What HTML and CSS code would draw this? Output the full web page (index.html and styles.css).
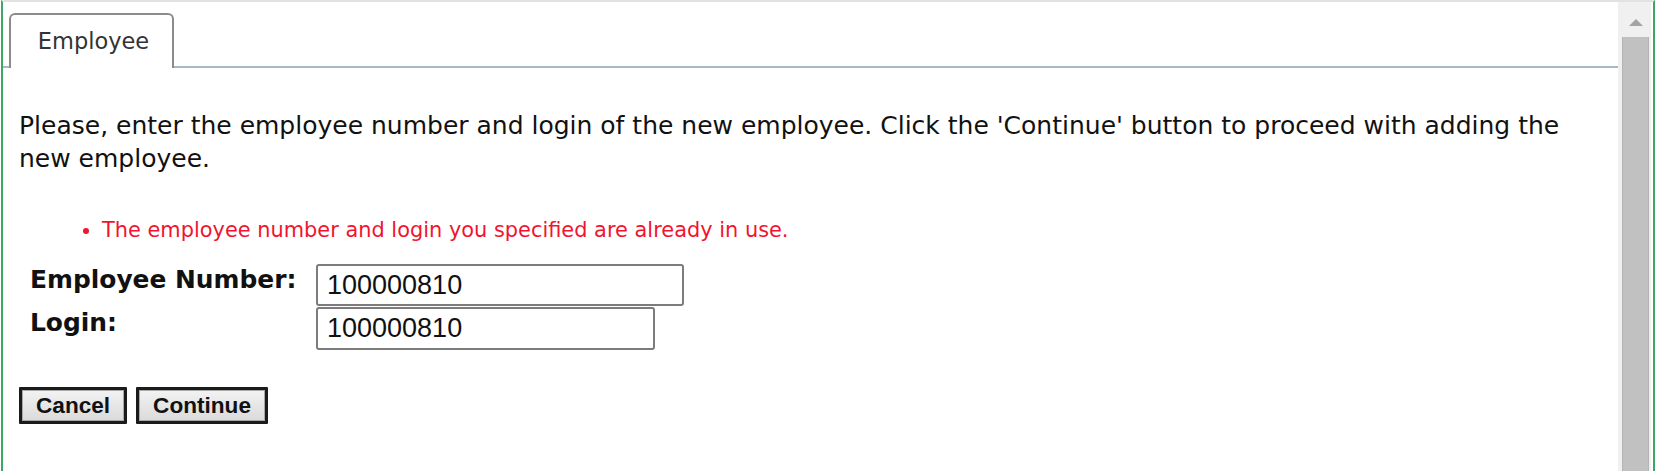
FILE: index.html
```html
<!DOCTYPE html>
<html lang="en">
<head>
<meta charset="utf-8">
<title>Employee</title>
<link rel="stylesheet" href="styles.css">
</head>
<body>
<div class="frame">
  <div class="content">
    <div class="tabs">
      <div class="tab">Employee</div>
    </div>
    <div class="panel">
      <p class="intro">Please, enter the employee number and login of the new employee. Click the 'Continue' button to proceed with adding the new employee.</p>
      <ul class="errors">
        <li>The employee number and login you specified are already in use.</li>
      </ul>
      <div class="form">
        <label class="label" for="num">Employee Number:</label>
        <div class="field"><input id="num" class="input input-num" type="text" value="100000810"></div>
        <label class="label" for="login">Login:</label>
        <div class="field"><input id="login" class="input input-login" type="text" value="100000810"></div>
      </div>
      <div class="actions">
        <button class="btn" type="button">Cancel</button>
        <button class="btn" type="button">Continue</button>
      </div>
    </div>
  </div>
  <div class="scrollbar">
    <div class="arrow"></div>
    <div class="thumb"></div>
  </div>
  <div class="gutter"></div>
</div>
</body>
</html>
```

FILE: styles.css
```css
html, body {
  margin: 0;
  padding: 0;
  background: #ffffff;
}

body {
  font-family: "DejaVu Sans", Verdana, sans-serif;
  color: #111;
}

.frame {
  display: flex;
  box-sizing: border-box;
  width: 1654px;
  height: 471px;
  margin-left: 1px;
  border-top: 2px solid #e2e2e2;
  border-left: 2px solid #3fa565;
  border-right: 2px solid #3fa565;
  overflow: hidden;
}

.content {
  flex: 1 1 auto;
  min-width: 0;
}

.tabs {
  display: flex;
  padding: 11px 0 0 6px;
  border-bottom: 2px solid #a7b9c9;
}

.tab {
  box-sizing: border-box;
  width: 165px;
  height: 55px;
  margin-bottom: -2px;
  padding: 1px 0 0 4px;
  border: 2px solid #8c8c8c;
  border-bottom: 0;
  border-radius: 6px 6px 0 0;
  background: #fff;
  text-align: center;
  font-size: 22.5px;
  line-height: 50px;
  color: #333;
}

.panel {
  padding: 0 20px 0 16px;
}

.intro {
  margin: 41px 0 0 0;
  font-size: 25px;
  line-height: 33px;
  color: #111;
}

.errors {
  margin: 42px 0 0 0;
  padding-left: 83px;
  font-size: 20.9px;
  line-height: 26px;
  color: #f2132f;
}

.form {
  display: grid;
  grid-template-columns: 286px auto;
  row-gap: 1px;
  margin: 21px 0 0 11px;
  align-items: start;
}

.label {
  font-size: 24.9px;
  font-weight: bold;
  line-height: 30px;
  padding-top: 1px;
  color: #111;
}

.field {
  display: flex;
}

.input {
  box-sizing: border-box;
  height: 42px;
  padding: 0 0 0 9px;
  border: 2px solid #7c7c7c;
  border-radius: 3px;
  font-family: "Liberation Sans", Arial, sans-serif;
  font-size: 27px;
  color: #111;
  background: #fff;
  outline: none;
}

.input-num {
  width: 368px;
}

.input-login {
  width: 339px;
  height: 43px;
}

.actions {
  display: flex;
  gap: 9px;
  margin-top: 37px;
}

.btn {
  box-sizing: border-box;
  height: 37px;
  padding: 0 14px;
  margin: 0;
  border: 3px solid #1b1b1b;
  border-radius: 1px;
  background: linear-gradient(#f3f3f3, #dadada);
  box-shadow: inset 0 0 0 1px #a9a9a9;
  font-family: "Liberation Sans", Arial, sans-serif;
  font-size: 22.6px;
  font-weight: bold;
  line-height: 31px;
  color: #111;
}

.scrollbar {
  flex: 0 0 33px;
  display: flex;
  flex-direction: column;
  align-items: flex-start;
  background: #f0f0f0;
}

.arrow {
  width: 0;
  height: 0;
  margin: 17px 0 0 11px;
  border-left: 7px solid transparent;
  border-right: 7px solid transparent;
  border-bottom: 7px solid #a3a3a3;
}

.thumb {
  flex: 1 1 auto;
  box-sizing: border-box;
  width: 27px;
  margin: 11px 0 0 4px;
  background: #c1c1c1;
  border-left: 1px solid #b4b4b4;
  border-right: 1px solid #b4b4b4;
}

.gutter {
  flex: 0 0 2px;
}
```
